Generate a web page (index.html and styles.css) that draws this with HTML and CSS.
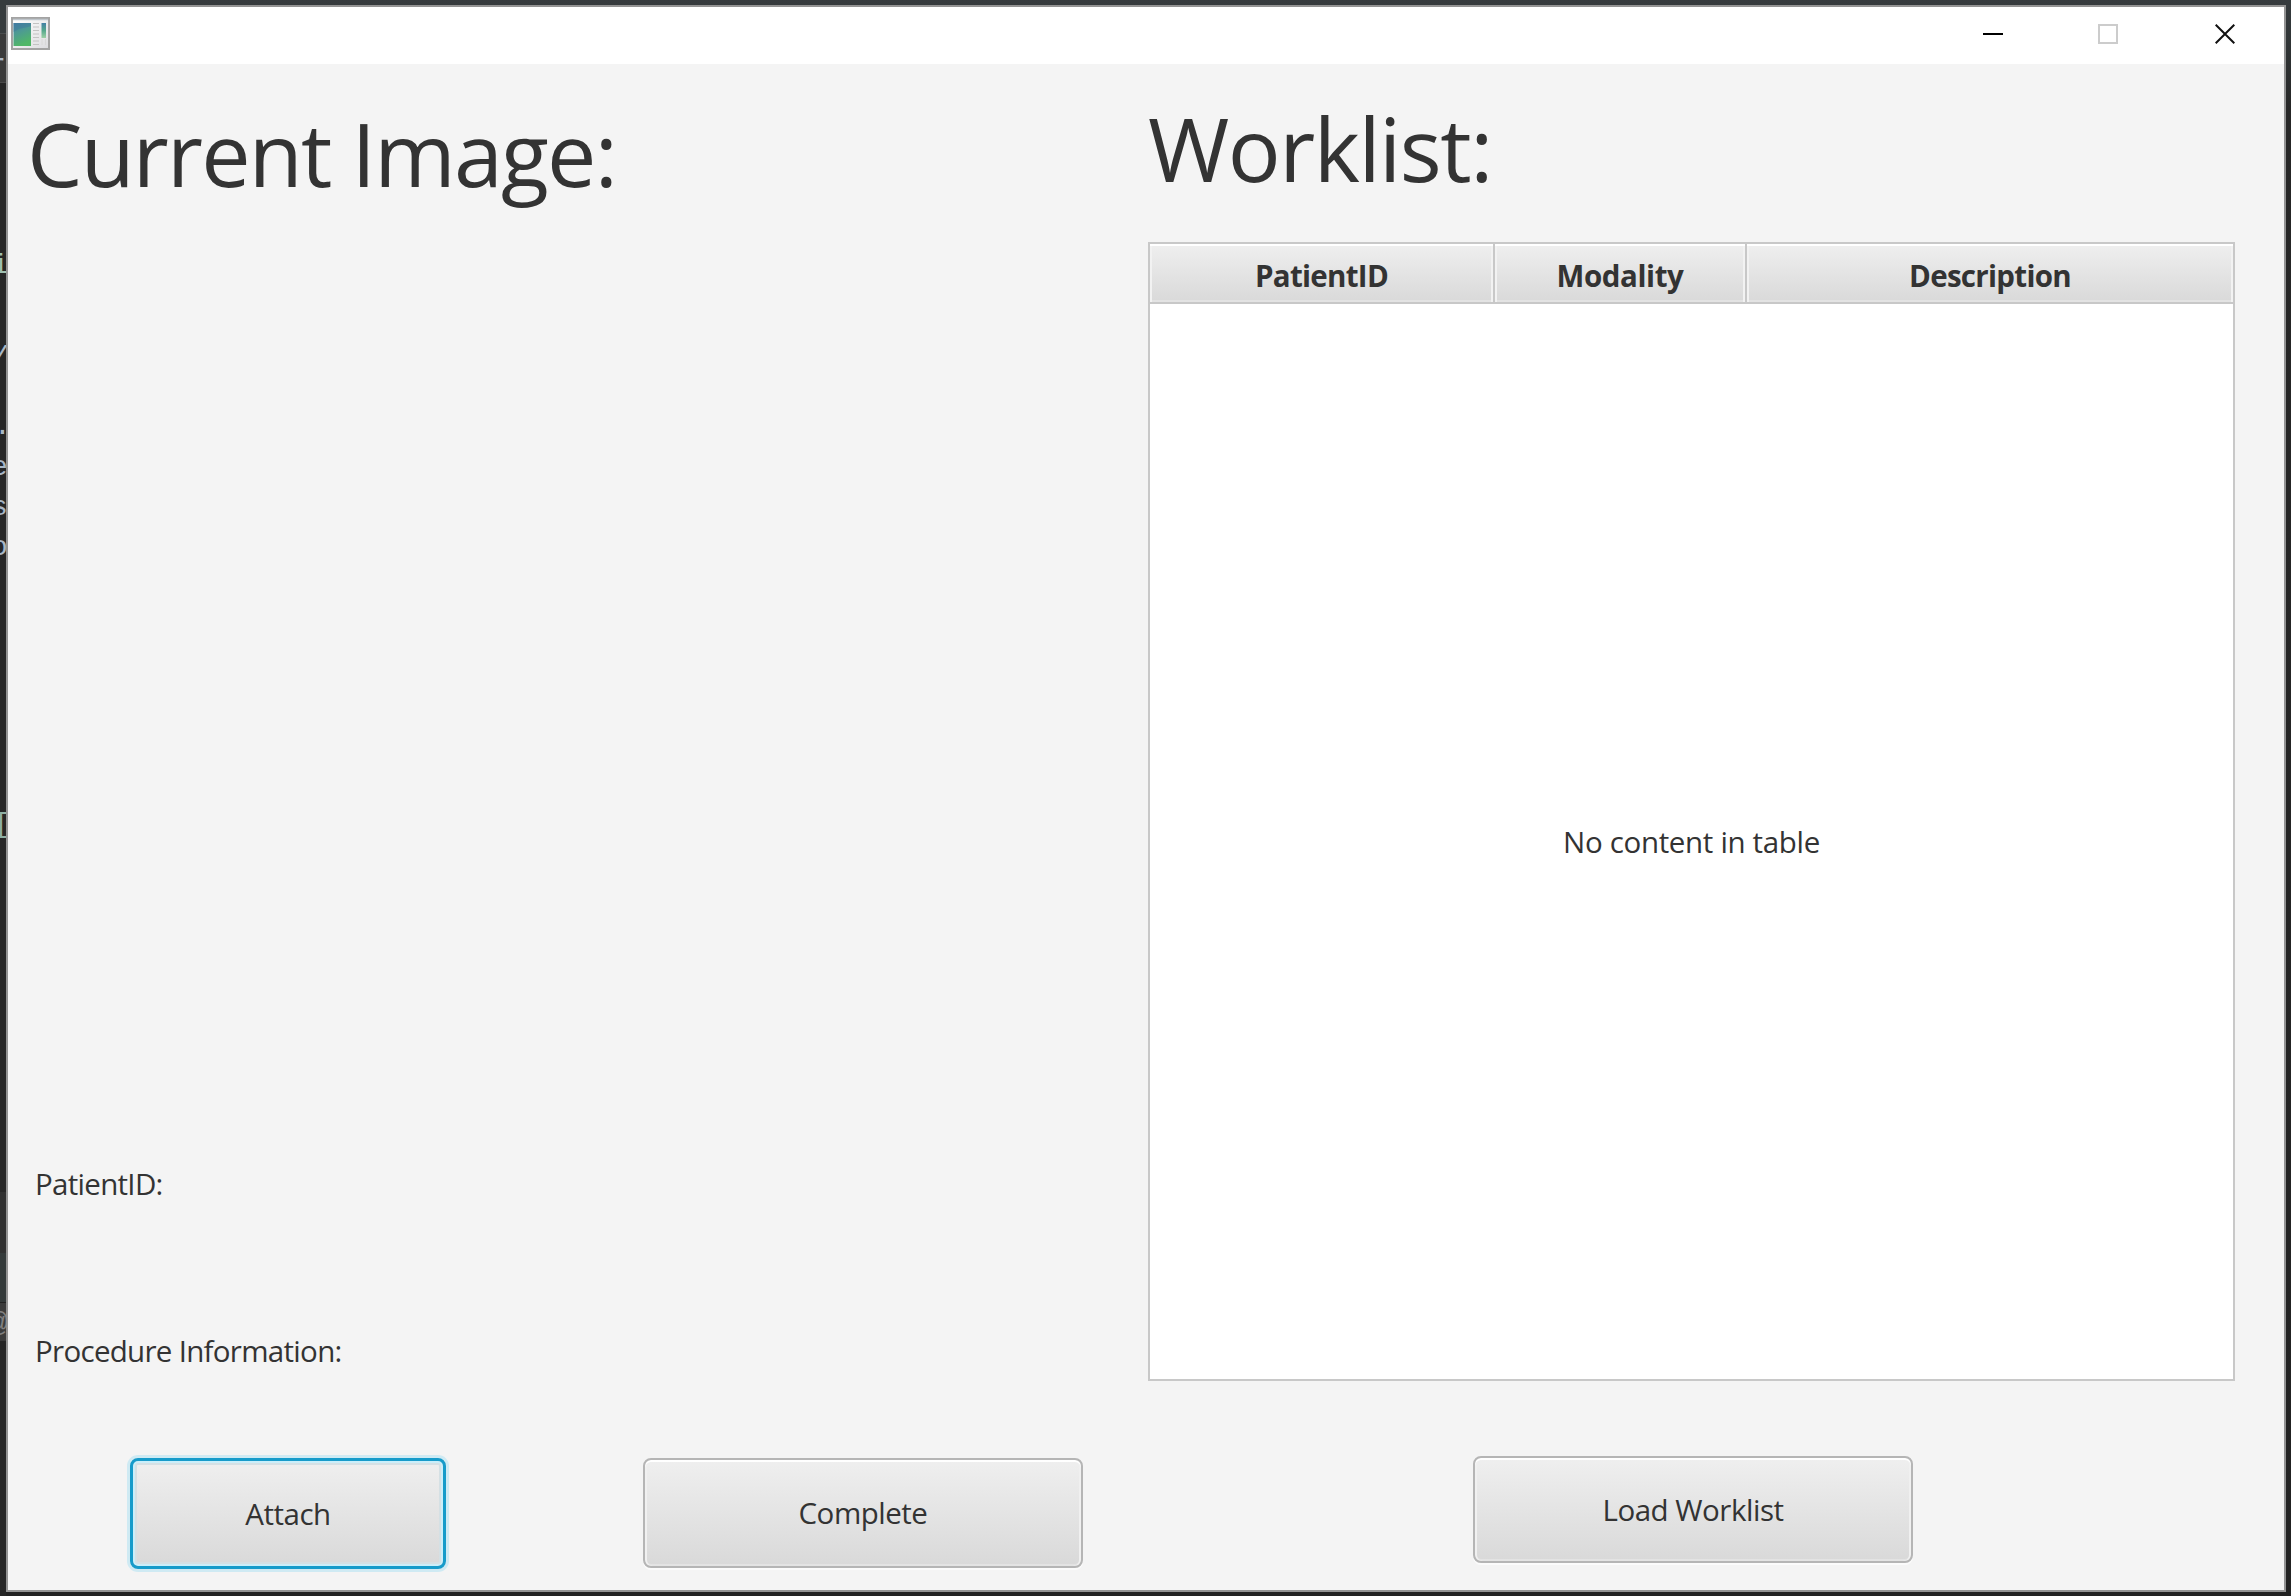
FILE: index.html
```html
<!DOCTYPE html>
<html lang="en">
<head>
<meta charset="utf-8">
<title>Worklist</title>
<link rel="stylesheet" href="styles.css">
</head>
<body>
<div class="editor" aria-hidden="true">
  <div class="band band-tabs"></div>
  <div class="band band-crumbs"></div>
  <div class="band band-panel"></div>
  <div class="band band-status"></div>
  <span class="code c1">r</span>
  <span class="code c2">i</span>
  <span class="code c3">y</span>
  <span class="code c4">.</span>
  <span class="code c5">e</span>
  <span class="code c6">s</span>
  <span class="code c7">o</span>
  <span class="code c8">[</span>
  <span class="code c9">@</span>
</div>
<main class="window">
  <header class="titlebar">
    <svg class="app-icon" width="39" height="33" viewBox="0 0 39 33">
      <defs>
        <linearGradient id="pane" x1="0" y1="0" x2="0.35" y2="1"><stop offset="0" stop-color="#437fa5"/><stop offset="0.45" stop-color="#4d9a93"/><stop offset="1" stop-color="#50b767"/></linearGradient>
        <linearGradient id="bar" x1="0" y1="0" x2="0" y2="1"><stop offset="0" stop-color="#437fa5"/><stop offset="0.5" stop-color="#55a88c"/><stop offset="1" stop-color="#9ed0a6"/></linearGradient>
        <linearGradient id="frame" x1="0" y1="0" x2="1" y2="1"><stop offset="0" stop-color="#ffffff"/><stop offset="1" stop-color="#dcdcdf"/></linearGradient>
      </defs>
      <rect x="1" y="1" width="37" height="31" fill="url(#frame)" stroke="#a3a3a3" stroke-width="2"/>
      <path d="M2 2.5H37" stroke="#bfc5cb" stroke-width="1.5"/>
      <rect x="2.5" y="6" width="17.5" height="23" fill="url(#pane)"/>
      <path d="M2.500 15C8 11 14 11 20 9V6H2.500Z" fill="#3d769e" opacity=".45"/>
      <path d="M22 6.500H28M22 10H28M22 13.500H28M22 17H28M22 20.500H28M22 24H28M22 27.500H28" stroke="#c3c3c3" stroke-width="1.200"/>
      <rect x="30.500" y="6" width="4.500" height="15" fill="url(#bar)"/>
      <path d="M31 22V28M34.500 22V28" stroke="#d8d8d8"/>
    </svg>
    <div class="controls">
      <svg width="20" height="20" viewBox="0 0 20 20"><path d="M0 10H20" stroke="#000" stroke-width="2"/></svg>
      <svg class="maximize" width="20" height="20" viewBox="0 0 20 20"><rect x="1" y="1" width="18" height="18" fill="none" stroke="#ccc" stroke-width="2"/></svg>
      <svg width="20" height="20" viewBox="0 0 20 20"><path d="M.7 .7L19.300 19.300M19.300 .7L.7 19.300" stroke="#111" stroke-width="2"/></svg>
    </div>
  </header>
  <div class="content">
    <section class="current">
      <h1 class="heading heading-current">Current Image:</h1>
      <div class="preview"></div>
      <p class="label label-patient">PatientID:</p>
      <p class="label label-procedure">Procedure Information:</p>
      <div class="actions">
        <button class="button attach"><span>Attach</span></button>
        <button class="button complete"><span>Complete</span></button>
      </div>
    </section>
    <section class="worklist">
      <h1 class="heading heading-worklist">Worklist:</h1>
      <div class="table">
        <div class="table-head">
          <div class="column"><span class="t-patient">PatientID</span></div>
          <div class="column"><span class="t-modality">Modality</span></div>
          <div class="column"><span class="t-description">Description</span></div>
        </div>
        <div class="table-body"><span>No content in table</span></div>
      </div>
      <button class="button load"><span>Load Worklist</span></button>
    </section>
  </div>
</main>
</body>
</html>
```
FILE: styles.css
```css
* { box-sizing: border-box; }

body {
  margin: 0;
  width: 2291px;
  height: 1596px;
  padding: 5px 5px 4px 6px;
  overflow: hidden;
  position: relative;
  background: linear-gradient(#363b3e 0, #303536 40px, #262626 110px, #222 100%);
  font-family: "Open Sans", "Noto Sans", sans-serif;
  font-size: 29.5px;
  color: #333;
}

/* sliver of the code editor that lies behind the window */
.editor {
  position: absolute;
  left: 0;
  top: 0;
  width: 6px;
  height: 1596px;
  overflow: hidden;
  background: #262626;
}
.band { position: absolute; left: 0; width: 6px; }
.band-tabs { top: 0; height: 33px; background: #363b3d; }
.band-crumbs { top: 33px; height: 50px; background: #3a3a3a; border-top: 1px solid #4a4d4e; border-bottom: 1px solid #4a4a4a; }
.band-panel { top: 1192px; height: 110px; background: linear-gradient(#303030 0 61px, #343a3a 61px); }
.band-status { top: 1302px; height: 39px; background: #3b3b3b; border-top: 1px solid #222; }
.code {
  position: absolute;
  font: 28px/30px "Liberation Mono", monospace;
  color: #a9b7c6;
}
.c1 { left: -11px; top: 51px; }
.c2 { left: -8px; top: 251px; color: #9fc0b0; }
.c3 { left: -10px; top: 338px; font-style: italic; }
.c4 { left: -6px; top: 412px; }
.c5 { left: -9px; top: 453px; }
.c6 { left: -9px; top: 493px; }
.c7 { left: -9px; top: 533px; }
.c8 { left: -6px; top: 810px; color: #8fb0a4; }
.c9 { left: -9px; top: 1309px; color: #808080; }

.window {
  position: relative;
  width: 2280px;
  height: 1587px;
  border: 2px solid #939393;
  background: #f4f4f4;
  display: flex;
  flex-direction: column;
}
.titlebar {
  height: 57px;
  flex: none;
  background: #fff;
  display: flex;
  justify-content: space-between;
  padding: 10px 49px 0 3px;
}
.controls { display: flex; gap: 96px; padding-top: 7px; }
.controls svg { display: block; }
.controls .maximize { margin: 0 1px 0 -1px; }

.content { flex: 1; display: grid; grid-template-columns: 1140px 1087px; }
.current, .worklist { display: flex; flex-direction: column; }

.heading { margin: 0; font-weight: 400; font-size: 88px; line-height: 120px; white-space: nowrap; }
.heading-current { margin: 29px 0 0 19px; letter-spacing: -1.8px; }
.heading-worklist { margin: 24px 0 0 0; letter-spacing: -1.5px; }
.preview { height: 951px; }
.label { margin: 0; padding-left: 27px; line-height: 40px; white-space: nowrap; letter-spacing: -.7px; }
.label-procedure { margin-top: 127px; }
.actions { display: flex; gap: 197px; margin: 87px 0 0 122px; }

.button {
  display: flex;
  align-items: center;
  justify-content: center;
  padding: 0;
  border: 2px solid #b5b5b5;
  border-radius: 8px;
  background: linear-gradient(#efefef, #d9d9d9);
  box-shadow: inset 0 2px 0 #fff, inset 2px 0 0 #f0f0f0, inset -2px 0 0 #f0f0f0, inset 0 -2px 0 #e3e3e3, 0 2px 0 #fbfbfb;
  font: inherit;
  color: #333;
  letter-spacing: -.48px;
}
.button span { white-space: nowrap; line-height: 40px; }
.attach {
  width: 316px;
  height: 111px;
  border: 3px solid #169bca;
  box-shadow: 0 0 0 3px #cfeaf3, inset 0 0 0 2px #cbeef9, inset 0 0 0 4px #d5e0e4;
}
.complete { width: 440px; height: 110px; }
.load { width: 440px; height: 107px; margin: 75px 0 0 325px; }

.table {
  width: 1087px;
  height: 1139px;
  margin-top: 34px;
  border: 2px solid #c8c8c8;
  background: #fff;
  display: flex;
  flex-direction: column;
}
.table-head {
  flex: none;
  height: 60px;
  display: grid;
  grid-template-columns: 345px 252px 1fr;
  border-bottom: 2px solid #c8c8c8;
  font-weight: 700;
}
.column {
  display: flex;
  align-items: center;
  justify-content: center;
  border-right: 2px solid #c8c8c8;
  background: linear-gradient(#efefef, #d9d9d9);
  box-shadow: inset 0 2px 0 #fff, inset 2px 0 0 #f2f2f2, inset -2px 0 0 #f2f2f2, inset 0 -2px 0 #e3e3e3;
}
.column:last-child { border-right: 0; }
.column span { line-height: 40px; padding-top: 5px; }
.t-patient, .t-description { letter-spacing: -.7px; }
.t-modality { letter-spacing: -.4px; }
.table-body { flex: 1; display: flex; align-items: center; justify-content: center; letter-spacing: -.33px; }
```
